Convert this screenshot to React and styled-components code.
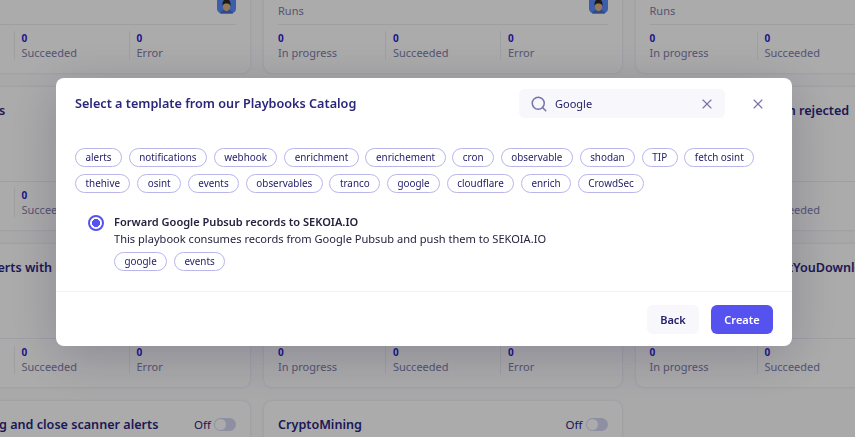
import React from "react";
import styled, { createGlobalStyle } from "styled-components";
import { X, Search } from "lucide-react";

const GlobalStyle = createGlobalStyle`
  html, body {
    margin: 0;
    height: 100%;
    overflow: hidden;
    background: #fcfcfe;
    font-family: "Noto Sans", "Open Sans", sans-serif;
  }
`;

const cards = [
  "Enrich IP addresses", "Notify on alert creation", "Report on new cases",
  "Tag observables", "Forward events", "Notify SOC of validation rejected",
  "Assign SOAR alerts with", "Scan the assets", "Enrich with IKnowWhatYouDownload",
  "Auto-unflagging and close scanner alerts", "CryptoMining",
];

const catalogTags = [
  "alerts", "notifications", "webhook", "enrichment", "enrichement", "cron",
  "observable", "shodan", "TIP", "fetch osint", "thehive", "osint", "events",
  "observables", "tranco", "google", "cloudflare", "enrich", "CrowdSec",
];

const Avatar = () => (
  <AvatarBox viewBox="0 0 20 20">
    <rect width="20" height="20" rx="5" fill="#5a8cff" />
    <path d="M3 20c1-3 4-4 7-4s6 1 7 4z" fill="#4a6fc8" />
    <ellipse cx="10" cy="12.5" rx="3.8" ry="5" fill="#e0b483" />
    <path d="M5.8 12c-.5-5 1.800-7 4.200-7s4.700 2 4.200 7c-.8-2-2.200-2.600-4.200-2.600S6.600 10 5.800 12z" fill="#2b2622" />
  </AvatarBox>
);

const PlaybookCard = ({ title }) => (
  <Card>
    <TitleRow>
      <CardTitle>{title}</CardTitle>
      <OffLabel>Off</OffLabel>
      <Toggle />
    </TitleRow>
    <RunsRow>
      <RunsLabel>Runs</RunsLabel>
      <Avatar />
    </RunsRow>
    <Stats>
      {["In progress", "Succeeded", "Error"].map((label) => (
        <Stat key={label}>
          <StatValue>0</StatValue>
          <StatLabel>{label}</StatLabel>
        </Stat>
      ))}
    </Stats>
  </Card>
);

const Tags = ({ items }) => (
  <TagList>
    {items.map((tag) => (
      <Tag key={tag}>{tag}</Tag>
    ))}
  </TagList>
);

export default function App() {
  return (
    <>
      <GlobalStyle />
      <CardGrid>
        {cards.map((title) => (
          <PlaybookCard key={title} title={title} />
        ))}
      </CardGrid>
      <Overlay>
        <Modal>
          <ModalHeader>
            <ModalTitle>Select a template from our Playbooks Catalog</ModalTitle>
            <SearchBox>
              <Search size={18} strokeWidth={2} color="#7773a8" />
              <SearchText>Google</SearchText>
              <X size={16} strokeWidth={1.7} color="#7773a8" />
            </SearchBox>
            <CloseButton>
              <X size={16} strokeWidth={1.7} />
            </CloseButton>
          </ModalHeader>
          <ModalBody>
            <Tags items={catalogTags} />
            <Template>
              <Radio />
              <TemplateInfo>
                <TemplateName>Forward Google Pubsub records to SEKOIA.IO</TemplateName>
                <TemplateDescription>
                  This playbook consumes records from Google Pubsub and push them to SEKOIA.IO
                </TemplateDescription>
                <Tags items={["google", "events"]} />
              </TemplateInfo>
            </Template>
          </ModalBody>
          <ModalFooter>
            <BackButton>Back</BackButton>
            <CreateButton>Create</CreateButton>
          </ModalFooter>
        </Modal>
      </Overlay>
    </>
  );
}

const CardGrid = styled.div`
  display: grid;
  grid-template-columns: repeat(3, 357.5px);
  grid-auto-rows: 143px;
  gap: 14px;
  margin: -70px 0 0 -107.5px;
`;

const Card = styled.div`
  box-sizing: border-box;
  padding: 14px 14px 0;
  background: #fff;
  border-radius: 8px;
  box-shadow: 0 0 3px rgba(60, 50, 140, 0.16);
  display: flex;
  flex-direction: column;
`;

const TitleRow = styled.div`
  display: flex;
  align-items: center;
  height: 19px;
`;

const CardTitle = styled.div`
  flex: 1;
  font-size: 12.6px;
  font-weight: 600;
  color: #2b2680;
  white-space: nowrap;
`;

const OffLabel = styled.span`
  font-size: 11.5px;
  color: #2b2680;
  margin-right: 3px;
`;

const Toggle = styled.span`
  position: relative;
  width: 22px;
  height: 13px;
  border-radius: 7px;
  background: #d6d5f5;
  &::after {
    content: "";
    position: absolute;
    left: 1px;
    top: 1px;
    width: 11px;
    height: 11px;
    border-radius: 50%;
    background: #fff;
  }
`;

const RunsRow = styled.div`
  display: flex;
  align-items: flex-end;
  justify-content: space-between;
  height: 53px;
  padding-bottom: 6px;
  border-bottom: 1px solid #eeeef4;
  margin-bottom: 6px;
  margin-top: 2px;
`;

const RunsLabel = styled.span`
  font-size: 11px;
  color: #807dab;
`;

const AvatarBox = styled.svg`
  width: 19px;
  height: 20px;
  margin-bottom: 4px;
`;

const Stats = styled.div`
  display: grid;
  grid-template-columns: 107px 115px 1fr;
  height: 28px;
`;

const Stat = styled.div`
  padding-left: 7px;
  border-left: 1px solid #eeeef4;
  &:first-child {
    padding-left: 0;
    border-left: 0;
  }
`;

const StatValue = styled.div`
  font-size: 10px;
  font-weight: 700;
  line-height: 14px;
  color: #2f1ccf;
`;

const StatLabel = styled.div`
  font-size: 11px;
  line-height: 15px;
  color: #807dab;
`;

const Overlay = styled.div`
  position: fixed;
  inset: 0;
  padding: 78px 63px 0 56px;
  background: rgba(0, 0, 0, 0.33);
`;

const Modal = styled.div`
  height: 268px;
  display: flex;
  flex-direction: column;
  background: #fff;
  border-radius: 8px;
  box-shadow: 0 10px 50px rgba(20, 15, 60, 0.22);
`;

const ModalHeader = styled.div`
  display: flex;
  align-items: center;
  padding: 11px 26px 0 19px;
`;

const ModalTitle = styled.div`
  flex: 1;
  margin-bottom: 2px;
  font-size: 12.65px;
  font-weight: 600;
  color: #2a2679;
`;

const SearchBox = styled.div`
  box-sizing: border-box;
  width: 206px;
  height: 29px;
  display: flex;
  align-items: center;
  padding: 0 10px 0 11px;
  border-radius: 6px;
  background: #f7f7fc;
`;

const SearchText = styled.span`
  flex: 1;
  margin-left: 7px;
  font-size: 11px;
  color: #25206b;
`;

const CloseButton = styled.div`
  display: flex;
  margin-left: 25px;
  color: #7773a8;
`;

const ModalBody = styled.div`
  flex: 1;
  padding: 30px 19px 0;
`;

const TagList = styled.div`
  display: flex;
  flex-wrap: wrap;
  gap: 7px 6.7px;
`;

const Tag = styled.span`
  box-sizing: border-box;
  height: 19px;
  padding: 0 9.5px;
  border: 1px solid #b9b6ec;
  border-radius: 10px;
  font-size: 9.9px;
  line-height: 17px;
  color: #25206b;
`;

const Template = styled.div`
  display: flex;
  gap: 10px;
  margin: 20px 0 0 13px;
`;

const Radio = styled.span`
  box-sizing: border-box;
  width: 16px;
  height: 16px;
  margin-top: 2px;
  border: 2px solid #5552f0;
  border-radius: 50%;
  background: radial-gradient(circle, #5552f0 0 3.8px, #fff 4.3px);
`;

const TemplateInfo = styled.div`
  display: flex;
  flex-direction: column;
`;

const TemplateName = styled.div`
  font-size: 11.05px;
  font-weight: 600;
  line-height: 17px;
  color: #25233f;
`;

const TemplateDescription = styled.div`
  font-size: 11.08px;
  line-height: 17px;
  color: #25233f;
  margin-bottom: 5px;
`;

const ModalFooter = styled.div`
  display: flex;
  justify-content: flex-end;
  gap: 12px;
  padding: 13px 19px 12px;
  border-top: 1px solid #f1f1f6;
`;

const BackButton = styled.div`
  width: 52px;
  height: 29px;
  border-radius: 6px;
  background: #f7f7fc;
  font-size: 11px;
  font-weight: 600;
  line-height: 29px;
  text-align: center;
  color: #25206b;
`;

const CreateButton = styled(BackButton)`
  width: 62px;
  background: #5552f0;
  color: #fff;
`;
